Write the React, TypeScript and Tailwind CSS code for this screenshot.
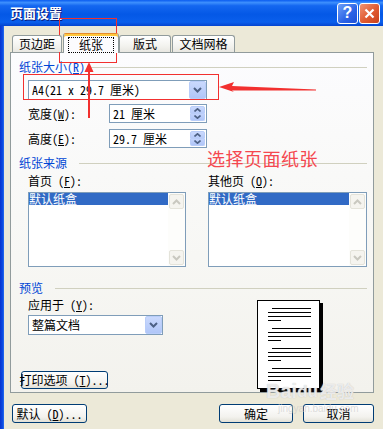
import React from 'react';

function Key({ k }: { k: string }) {
  return (
    <>
      (<span className="underline">{k}</span>)
    </>
  );
}

function Chevron({ up = false, color = '#4d6185' }: { up?: boolean; color?: string }) {
  return (
    <svg width="9" height="6" viewBox="0 0 9 6">
      <path
        d={up ? 'M1 5 L4.5 1.5 L8 5' : 'M1 1 L4.5 4.5 L8 1'}
        fill="none"
        stroke={color}
        strokeWidth="2"
      />
    </svg>
  );
}

function GroupHeader({ label, gap }: { label: React.ReactNode; gap: string }) {
  return (
    <div className={`flex items-center h-[14px] pl-[8px] pr-[6px] ${gap}`}>
      <span className="text-[#0046d5] whitespace-nowrap">{label}</span>
      <div className="flex-1 h-px bg-[#d0d0bf]" />
    </div>
  );
}

function Combo({ text, width }: { text: string; width: string }) {
  return (
    <div className={`${width} h-[20px] flex items-center border border-[#7f9db9] bg-white`}>
      <span className="flex-1 pl-[3px] whitespace-nowrap">{text}</span>
      <div className="w-[17px] h-[18px] flex items-center justify-center rounded-[2px] border border-[#b9cdf9] bg-[linear-gradient(to_bottom,#cad9fd,#b0c6f8)]">
        <Chevron />
      </div>
    </div>
  );
}

function Spinner({ text }: { text: string }) {
  return (
    <div className="w-[98px] h-full flex items-center border border-[#7f9db9] bg-white">
      <span className="flex-1 pl-[3px] whitespace-nowrap">{text}</span>
      <div className="w-[17px] h-full flex flex-col p-[1px] gap-0">
        <div className="flex-1 flex items-center justify-center rounded-t-[2px] border border-[#b9cdf9] bg-[linear-gradient(to_bottom,#cad9fd,#b7cbf9)]">
          <svg width="7" height="4" viewBox="0 0 7 4">
            <path d="M0.5 3.5 L3.5 0.8 L6.5 3.5" fill="none" stroke="#4d6185" strokeWidth="1.6" />
          </svg>
        </div>
        <div className="flex-1 flex items-center justify-center rounded-b-[2px] border border-t-0 border-[#b9cdf9] bg-[linear-gradient(to_bottom,#c2d3fc,#afc5f8)]">
          <svg width="7" height="4" viewBox="0 0 7 4">
            <path d="M0.5 0.5 L3.5 3.2 L6.5 0.5" fill="none" stroke="#4d6185" strokeWidth="1.6" />
          </svg>
        </div>
      </div>
    </div>
  );
}

function ListBox({ width }: { width: string }) {
  return (
    <div className={`${width} h-full flex border border-[#7f9db9] bg-white`}>
      <div className="flex-1 pt-[0px]">
        <div className="h-[12px] leading-[12px] bg-[#316ac5] text-white">默认纸盒</div>
      </div>
      <div className="w-[17px] flex flex-col justify-between bg-[#fdfdfb] p-[1px]">
        <div className="h-[15px] flex items-center justify-center rounded-[2px] border border-[#e4e3da] bg-[#f5f4ef]">
          <Chevron up color="#c9c8c0" />
        </div>
        <div className="h-[15px] flex items-center justify-center rounded-[2px] border border-[#e4e3da] bg-[#f5f4ef]">
          <Chevron color="#c9c8c0" />
        </div>
      </div>
    </div>
  );
}

function XpButton({ children, width, height = 'h-[19px]', extra = '' }: { children: React.ReactNode; width: string; height?: string; extra?: string }) {
  return (
    <button
      className={`${width} ${height} ${extra} flex items-center justify-center rounded-[3px] border border-[#003c74] bg-[linear-gradient(to_bottom,#ffffff,#f3f2ee_70%,#e2e0d6)] text-black whitespace-nowrap`}
    >
      {children}
    </button>
  );
}

function TextLines() {
  const group = (
    <div className="flex flex-col gap-[3px]">
      <div className="ml-[4px] w-[39px] h-px bg-black" />
      <div className="w-[43px] h-px bg-black" />
      <div className="w-[43px] h-px bg-black" />
      <div className="w-[13px] h-px bg-black" />
    </div>
  );
  return (
    <div className="flex flex-col gap-[7px] pl-[10px] pt-[7px]">
      {group}
      {group}
      {group}
      {group}
    </div>
  );
}

export default function App() {
  return (
    <div className="relative w-[383px] h-[429px] overflow-hidden flex flex-col bg-[#ece9d8] text-black text-[12px] leading-[14px] font-['Noto_Sans_Mono_CJK_SC','Noto_Sans_CJK_SC','Liberation_Sans',sans-serif]">
      {/* title bar */}
      <div className="h-[26px] shrink-0 flex items-center pl-[10px] pr-[3px] bg-[linear-gradient(to_bottom,#0a5cf0_0%,#3d8ffd_10%,#1467f0_22%,#0458e6_55%,#0a5fec_85%,#0444cf_100%)]">
        <span className="text-white font-bold text-[13px] [text-shadow:1px_1px_0_#0a1a7a] font-['Noto_Sans_CJK_SC',sans-serif]">页面设置</span>
        <div className="ml-auto flex gap-[1px]">
          <div className="w-[21px] h-[21px] flex items-center justify-center rounded-[3px] border border-white bg-[linear-gradient(135deg,#6ea0f8,#2a62e6_60%,#1e50d6)] text-white font-bold text-[16px] leading-none font-['Liberation_Sans',sans-serif]">
            ?
          </div>
          <div className="w-[21px] h-[21px] flex items-center justify-center rounded-[3px] border border-white bg-[linear-gradient(135deg,#f19373,#e05a30_55%,#c9411a)]">
            <svg width="11" height="11" viewBox="0 0 11 11">
              <path d="M1.5 1.5 L9.5 9.5 M9.5 1.5 L1.5 9.5" stroke="white" strokeWidth="2.2" />
            </svg>
          </div>
        </div>
      </div>

      <div className="flex flex-1">
        <div className="w-[4px] bg-[linear-gradient(to_right,#0a34cf,#0d4ae0_60%,#2a6ff0)]" />
        <div className="flex-1 flex flex-col pl-[6px] pt-[7px]">
          {/* tabs */}
          <div className="relative z-10 flex items-end h-[19px] pl-[2px]">
            <div className="w-[50px] h-[17px] flex items-center justify-center border border-b-0 border-[#919b9c] rounded-t-[3px] bg-[linear-gradient(to_bottom,#ffffff,#f3f3ef_60%,#e8e7e1)]">
              页边距
            </div>
            <div className="ml-[1px] w-[56px] h-[20px] -mb-[1px] flex items-center justify-center border-x border-t border-[#919b9c] border-t-[#e68b2c] rounded-t-[3px] bg-[#fcfcfe] shadow-[inset_0_2px_0_#ffc83c]">
              <span className="mt-[2px] px-[10px] h-[14px] leading-[14px] outline outline-1 outline-dotted outline-black">纸张</span>
            </div>
            <div className="w-[52px] h-[17px] flex items-center justify-center border border-b-0 border-[#919b9c] rounded-t-[3px] bg-[linear-gradient(to_bottom,#ffffff,#f3f3ef_60%,#e8e7e1)]">
              版式
            </div>
            <div className="ml-[1px] w-[63px] h-[17px] flex items-center justify-center border border-b-0 border-[#919b9c] rounded-t-[3px] bg-[linear-gradient(to_bottom,#ffffff,#f3f3ef_60%,#e8e7e1)]">
              文档网格
            </div>
          </div>

          {/* panel */}
          <div className="w-[364px] h-[341px] flex flex-col border border-[#919b9c] bg-[linear-gradient(to_bottom,#fcfcfe,#f7f7f4_60%,#f3f2ed)]">
            <div className="mt-[7px]">
              <GroupHeader label={<>纸张大小<Key k="R" /></>} gap="gap-[4px]" />
            </div>
            <div className="mt-[6px] ml-[17px]">
              <Combo text="A4(21 x 29.7 厘米)" width="w-[179px]" />
            </div>
            <div className="mt-[4px] h-[19px] pl-[17px] flex items-center">
              <span className="w-[81px]">宽度<Key k="W" />:</span>
              <Spinner text="21 厘米" />
            </div>
            <div className="mt-[6px] h-[19px] pl-[17px] flex items-center">
              <span className="w-[81px]">高度<Key k="E" />:</span>
              <Spinner text="29.7 厘米" />
            </div>

            <div className="mt-[8px]">
              <GroupHeader label="纸张来源" gap="gap-[12px]" />
            </div>
            <div className="mt-[4px] h-[14px] pl-[17px] flex">
              <span className="w-[180px]">首页 <Key k="F" />:</span>
              <span>其他页 <Key k="O" />:</span>
            </div>
            <div className="mt-[4px] h-[75px] pl-[17px] flex gap-[22px]">
              <ListBox width="w-[158px]" />
              <ListBox width="w-[159px]" />
            </div>

            <div className="mt-[14px]">
              <GroupHeader label="预览" gap="gap-[12px]" />
            </div>
            <div className="flex">
              <div className="w-[246px] flex flex-col pl-[17px]">
                <span className="mt-[3px] h-[14px]">应用于 <Key k="Y" />:</span>
                <div className="mt-[3px]">
                  <Combo text="整篇文档" width="w-[135px]" />
                </div>
                <div className="mt-[36px] -ml-[7px]">
                  <XpButton width="w-[87px]" height="h-[18px]">
                    打印选项 <Key k="T" />...
                  </XpButton>
                </div>
              </div>
              <div className="mt-[5px] w-[63px] h-[89px] border border-black bg-white shadow-[3px_3px_0_#000]">
                <TextLines />
              </div>
            </div>
          </div>

          {/* bottom buttons */}
          <div className="mt-[11px] flex pl-[2px] pr-[9px]">
            <XpButton width="w-[75px]">
              默认 <Key k="D" />...
            </XpButton>
            <XpButton width="w-[74px]" extra="ml-auto">确定</XpButton>
            <XpButton width="w-[71px]" extra="ml-[10px]">取消</XpButton>
          </div>
        </div>
      </div>

      {/* annotation overlay */}
      <svg className="absolute left-0 top-0 pointer-events-none" width="383" height="429" viewBox="0 0 383 429">
        <rect x="59.5" y="18.5" width="57" height="44" fill="none" stroke="#f2302f" strokeWidth="1" />
        <rect x="23.5" y="74.5" width="195" height="25" fill="none" stroke="#f2302f" strokeWidth="1" />
        <rect x="88" y="71" width="2" height="47" fill="#f2302f" />
        <polygon points="89,62 84.5,72 93.5,72" fill="#f2302f" />
        <polygon points="219,87 234,82 232,86 316,89.4 316,90.4 232,90.5 234,92" fill="#f2302f" />
      </svg>
      <div className="absolute left-[207px] top-[148px] text-[18px] leading-[20px] tracking-[0.5px] text-[#f5474f] font-['Noto_Sans_CJK_SC',sans-serif] pointer-events-none">
        选择页面纸张
      </div>

      {/* watermark */}
      <div className="absolute left-[266px] top-[380px] flex items-end text-[20px] leading-[22px] font-bold text-white/70 [text-shadow:0_0_1px_#b9b9b9] font-['Liberation_Sans',sans-serif] pointer-events-none">
        <span>Bai</span>
        <span className="text-[17px] -mb-[1px]">du</span>
        <span className="ml-[2px] text-[17px] font-['Noto_Sans_CJK_SC',sans-serif]">经验</span>
      </div>
      <div className="absolute left-[278px] top-[404px] text-[10px] leading-[10px] text-[#c8c8c8]/60 font-['Liberation_Sans',sans-serif] pointer-events-none">
        jingyan.baidu.com
      </div>
    </div>
  );
}
